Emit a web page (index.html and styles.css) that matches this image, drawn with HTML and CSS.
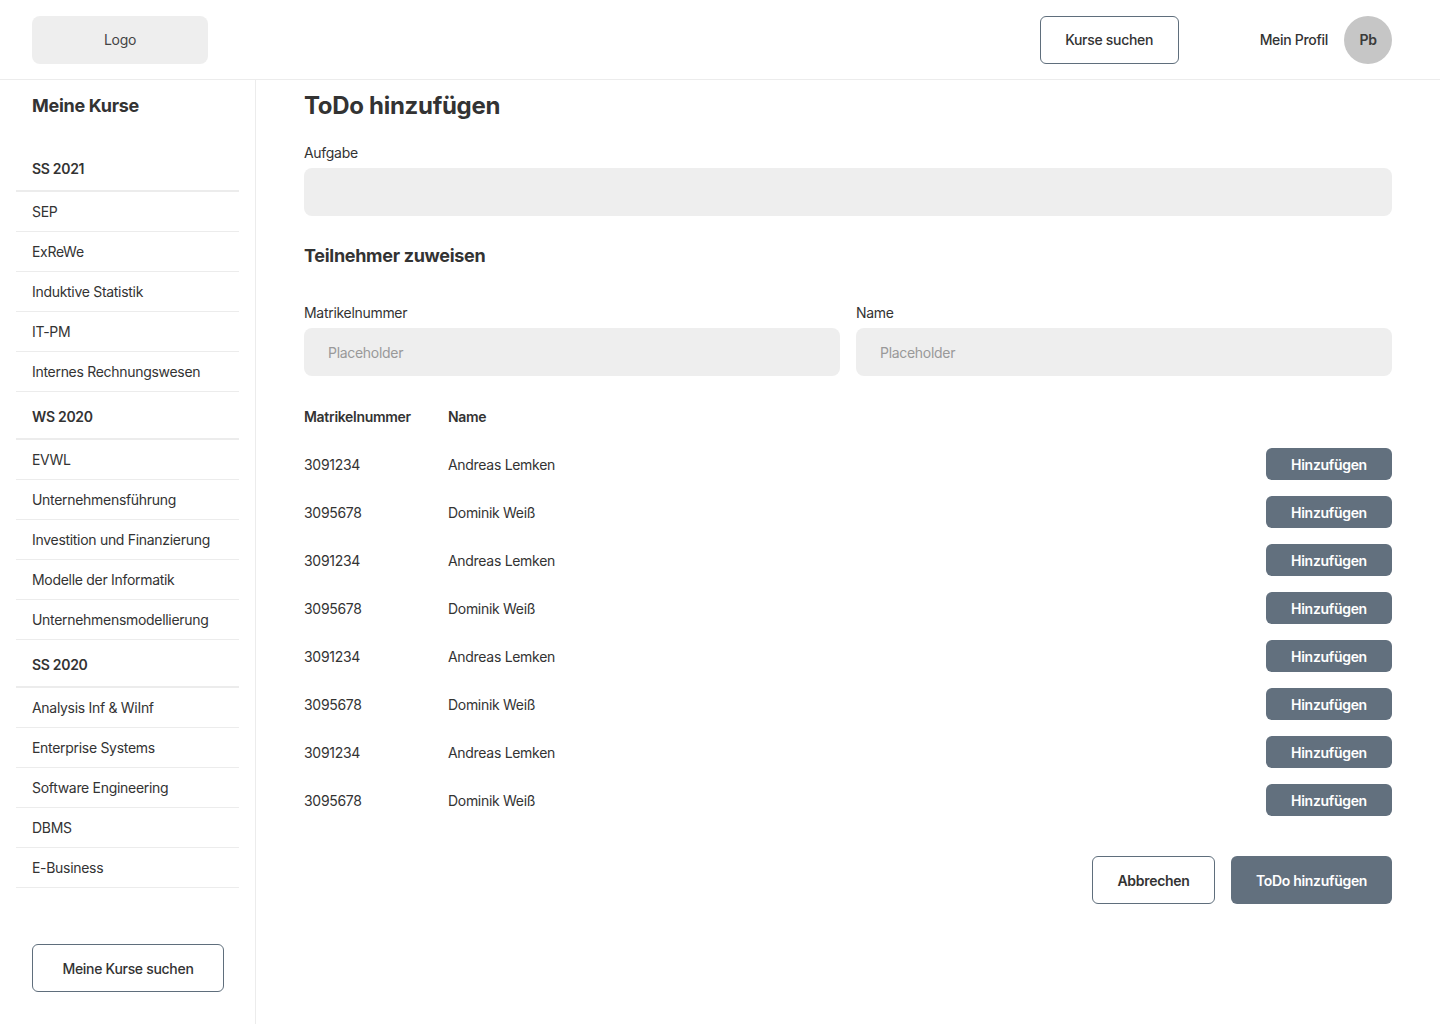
FILE: index.html
```html
<!DOCTYPE html>
<html lang="de">
<head>
<meta charset="utf-8">
<title>ToDo hinzufügen</title>
<link rel="stylesheet" href="styles.css">
</head>
<body>
<header class="topbar">
  <div class="logo">Logo</div>
  <div class="top-actions">
    <button class="btn-outline btn-lg">Kurse suchen</button>
    <span class="profile-label">Mein Profil</span>
    <div class="avatar">Pb</div>
  </div>
</header>
<div class="layout">
  <aside class="sidebar">
    <h2 class="side-title">Meine Kurse</h2>
    <div class="side-group">
      <div class="sem">SS 2021</div>
      <div class="course">SEP</div>
      <div class="course">ExReWe</div>
      <div class="course">Induktive Statistik</div>
      <div class="course">IT-PM</div>
      <div class="course">Internes Rechnungswesen</div>
      <div class="sem">WS 2020</div>
      <div class="course">EVWL</div>
      <div class="course">Unternehmensführung</div>
      <div class="course">Investition und Finanzierung</div>
      <div class="course">Modelle der Informatik</div>
      <div class="course">Unternehmensmodellierung</div>
      <div class="sem">SS 2020</div>
      <div class="course">Analysis Inf &amp; WiInf</div>
      <div class="course">Enterprise Systems</div>
      <div class="course">Software Engineering</div>
      <div class="course">DBMS</div>
      <div class="course">E-Business</div>
    </div>
    <button class="btn-outline btn-side">Meine Kurse suchen</button>
  </aside>
  <main class="main">
    <h1 class="page-title">ToDo hinzufügen</h1>
    <label class="field-label">Aufgabe</label>
    <div class="input input-task"></div>
    <h2 class="section-title">Teilnehmer zuweisen</h2>
    <div class="filters">
      <div class="filter">
        <label class="field-label">Matrikelnummer</label>
        <div class="input">Placeholder</div>
      </div>
      <div class="filter">
        <label class="field-label">Name</label>
        <div class="input">Placeholder</div>
      </div>
    </div>
    <div class="table">
      <div class="row head"><span class="c1">Matrikelnummer</span><span class="c2">Name</span></div>
      <div class="row"><span class="c1">3091234</span><span class="c2">Andreas Lemken</span><button class="btn-add">Hinzufügen</button></div>
      <div class="row"><span class="c1">3095678</span><span class="c2">Dominik Weiß</span><button class="btn-add">Hinzufügen</button></div>
      <div class="row"><span class="c1">3091234</span><span class="c2">Andreas Lemken</span><button class="btn-add">Hinzufügen</button></div>
      <div class="row"><span class="c1">3095678</span><span class="c2">Dominik Weiß</span><button class="btn-add">Hinzufügen</button></div>
      <div class="row"><span class="c1">3091234</span><span class="c2">Andreas Lemken</span><button class="btn-add">Hinzufügen</button></div>
      <div class="row"><span class="c1">3095678</span><span class="c2">Dominik Weiß</span><button class="btn-add">Hinzufügen</button></div>
      <div class="row"><span class="c1">3091234</span><span class="c2">Andreas Lemken</span><button class="btn-add">Hinzufügen</button></div>
      <div class="row"><span class="c1">3095678</span><span class="c2">Dominik Weiß</span><button class="btn-add">Hinzufügen</button></div>
    </div>
    <div class="form-actions">
      <button class="btn-outline btn-lg btn-cancel">Abbrechen</button>
      <button class="btn-primary">ToDo hinzufügen</button>
    </div>
  </main>
</div>
</body>
</html>
```

FILE: styles.css
```css
* { box-sizing: border-box; }
html, body { margin: 0; padding: 0; }
body {
  font-family: Inter, "Noto Sans", sans-serif;
  color: #333;
  background: #fff;
  font-size: 14px;
  letter-spacing: -0.3px;
  width: 1440px;
  height: 1024px;
  overflow: hidden;
}
button { font-family: inherit; letter-spacing: inherit; cursor: pointer; }

.topbar {
  height: 80px;
  border-bottom: 1px solid #ececec;
  display: flex;
  align-items: center;
  justify-content: space-between;
  padding: 0 48px 0 32px;
}
.logo {
  width: 176px;
  height: 48px;
  background: #eee;
  border-radius: 8px;
  display: flex;
  align-items: center;
  justify-content: center;
  color: #444;
  font-size: 14px;
}
.top-actions { display: flex; align-items: center; }
.btn-outline {
  background: #fff;
  border: 1px solid #5f6e7c;
  border-radius: 6px;
  color: #333;
  font-size: 14px;
  font-weight: 500;
}
.btn-lg { height: 48px; padding: 0 24px; }
.top-actions .btn-lg { width: 139px; padding: 0; margin-right: 81px; }
.profile-label { font-size: 14px; font-weight: 500; color: #333; margin-right: 16px; }
.avatar {
  width: 48px; height: 48px; border-radius: 50%;
  background: #c6c6c6;
  display: flex; align-items: center; justify-content: center;
  font-weight: 600; font-size: 14px; color: #3a3a3a;
}

.layout { display: flex; height: 944px; }
.sidebar {
  width: 256px;
  border-right: 1px solid #ececec;
  padding: 14px 16px 0;
  display: flex;
  flex-direction: column;
}
.side-title {
  margin: 0 0 28px 16px;
  font-size: 18px;
  line-height: 24px;
  font-weight: 700;
  color: #333;
}
.sem {
  height: 48px;
  padding: 0 16px;
  display: flex; align-items: center;
  font-weight: 600;
  border-bottom: 2px solid #ececec;
  padding-top: 2px;
}
.side-group .sem:first-child { height: 46px; padding-top: 0; }
.course {
  height: 40px;
  padding: 0 16px;
  display: flex; align-items: center;
  border-bottom: 1px solid #ececec;
  color: #333;
}
.btn-side {
  margin: 56px 0 0 16px;
  width: 192px;
  height: 48px;
}

.main { flex: 1; padding: 10px 48px 0; }
.page-title {
  margin: 0 0 21px;
  font-size: 24px; line-height: 32px; font-weight: 700; color: #333;
}
.field-label { display: block; font-size: 14px; line-height: 20px; margin-bottom: 5px; color: #333; }
.input {
  height: 48px; background: #eee; border-radius: 8px;
  display: flex; align-items: center; padding: 0 24px;
  color: #999; font-size: 14px;
}
.section-title {
  margin: 28px 0 35px;
  font-size: 18px; line-height: 24px; font-weight: 700; color: #333;
}
.filters { display: flex; gap: 16px; }
.filter { flex: 1; }
.table { margin-top: 16px; }
.row { height: 48px; display: flex; align-items: center; }
.row.head { font-weight: 600; }
.c1 { width: 144px; }
.c2 { flex: 1; }
.btn-add {
  width: 126px; height: 32px;
  background: #62707e; color: #fff; border: none; border-radius: 6px;
  font-size: 14px; font-weight: 600;
}
.form-actions { display: flex; justify-content: flex-end; gap: 16px; margin-top: 32px; }
.btn-cancel { width: 123px; padding: 0; font-weight: 600; }
.btn-primary {
  width: 161px; height: 48px;
  background: #62707e; color: #fff; border: none; border-radius: 6px;
  font-size: 14px; font-weight: 600;
}
```
